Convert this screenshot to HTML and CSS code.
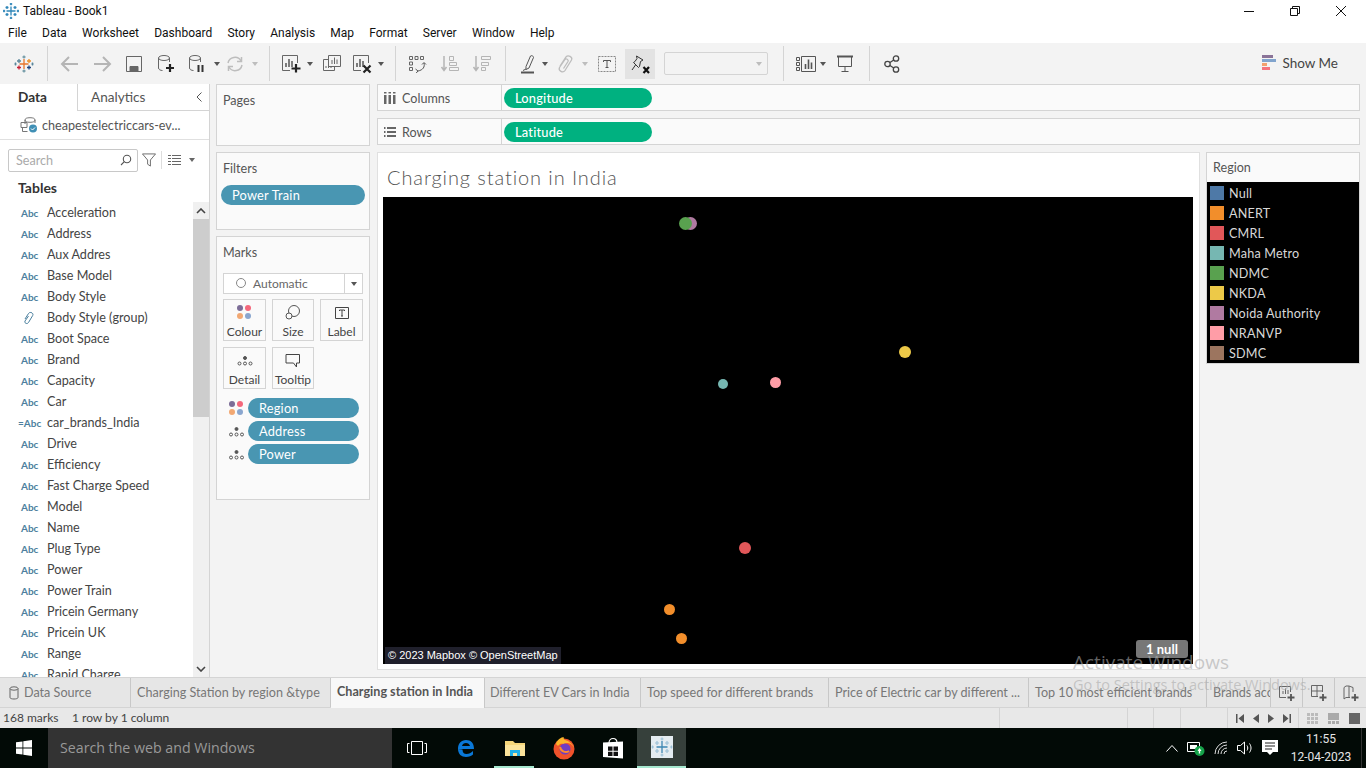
FILE: index.html
```html
<!DOCTYPE html>
<html lang="en">
<head>
    <meta charset="UTF-8">
    <title>Tableau - Book1</title>
    <link rel="stylesheet" href="styles.css">
</head>
<body>

    <!-- title bar -->
    <div class="titlebar">
        <svg class="app-logo" width="18" height="18" viewBox="0 0 18 18" fill="none" stroke="#2f86b8" stroke-width="1.300"><path d="M9 4.500v9M4.500 9h9"/><path d="M5 4v3M3.500 5.500h3M13 4v3M11.500 5.500h3M5 11v3M3.500 12.500h3M13 11v3M11.500 12.500h3"/><path d="M9 1v2.200M7.800 2h2.400M9 14.800V17M7.800 16h2.400M1 9h2.200M2 7.800v2.400M14.800 9H17M16 7.800v2.400"/></svg>
        <span class="app-title">Tableau - Book1</span>
        <div class="win-buttons">
            <svg width="12" height="12" viewBox="0 0 12 12"><path d="M1 6.500h10" stroke="#111" fill="none"/></svg>
            <svg width="12" height="12" viewBox="0 0 12 12"><path d="M1.500 3.500h7v7h-7zM3.500 3.500v-2h7v7h-2" stroke="#111" fill="none"/></svg>
            <svg width="12" height="12" viewBox="0 0 12 12"><path d="M1 1l10 10M11 1L1 11" stroke="#111" fill="none"/></svg>
        </div>
    </div>

    <!-- menu -->
    <div class="menubar">
        <span>File</span><span>Data</span><span>Worksheet</span><span>Dashboard</span><span>Story</span><span>Analysis</span><span>Map</span><span>Format</span><span>Server</span><span>Window</span><span>Help</span>
    </div>

    <!-- toolbar -->
    <div class="toolbar">
        <div class="tool w47"><svg width="20" height="20" viewBox="0 0 20 20" fill="none" stroke-width="1.300"><path d="M10 5v10M5.500 10h9" stroke="#e8762b"/><path d="M5 5v4M3 7h4" stroke="#5b879b"/><path d="M15 5v4M13 7h4" stroke="#eb912b"/><path d="M5 11.500v4M3 13.500h4" stroke="#c72035"/><path d="M15 11.500v4M13 13.500h4" stroke="#1f447e"/><path d="M10 1.500v3M8.500 3h3M10 15.500v3M8.500 17h3" stroke="#7099a6"/><path d="M1.500 8.500v3M.5 10h2M18.500 8.500v3M17.500 10h2" stroke="#59879b"/></svg></div>
        <div class="sep"></div>
        <div class="tool w32 ml6"><svg width="20" height="20" viewBox="0 0 20 20" fill="none" stroke="#b5b5b5" stroke-width="2"><path d="M2 10h16M9 3l-7 7 7 7"/></svg></div>
        <div class="tool w32"><svg width="20" height="20" viewBox="0 0 20 20" fill="none" stroke="#b5b5b5" stroke-width="2"><path d="M2 10h16M11 3l7 7-7 7"/></svg></div>
        <div class="tool w32"><svg width="18" height="18" viewBox="0 0 18 18" fill="none" stroke="#666"><path d="M1.500 1.500h15v15h-15z"/><path d="M5 16.500v-5h8v5" fill="#666"/></svg></div>
        <div class="tool w32"><svg width="20" height="20" viewBox="0 0 20 20" fill="none"><ellipse cx="8" cy="4" rx="5.500" ry="2.500" stroke="#666"/><path d="M2.500 4v10c0 1.500 2 2.500 4 2.500M13.500 4v4" stroke="#666"/><path d="M14 10v8M10 14h8" stroke="#222" stroke-width="2.200"/></svg></div>
        <div class="tool w30"><svg width="20" height="20" viewBox="0 0 20 20" fill="none"><ellipse cx="8" cy="4" rx="5.500" ry="2.500" stroke="#666"/><path d="M2.500 4v10c0 1.500 2 2.500 4 2.500M13.500 4v4" stroke="#666"/><path d="M11.500 11v7M15.500 11v7" stroke="#333" stroke-width="2"/></svg></div>
        <div class="tool w10"><i class="caret"></i></div>
        <div class="tool w26"><svg width="20" height="20" viewBox="0 0 20 20" fill="none" stroke="#bdbdbd" stroke-width="1.500"><path d="M3 9a7 7 0 0 1 13-2M17 11a7 7 0 0 1-13 2"/><path d="M16.500 3v4.500H12M3.500 17v-4.500H8"/></svg></div>
        <div class="tool w14"><i class="caret off"></i></div>
        <div class="sep ml7"></div>

        <div class="tool ml9"><svg width="20" height="20" viewBox="0 0 20 20" fill="none"><path d="M9 16.500H1.500v-15h15V9" stroke="#666"/><path d="M5 13V9M8 13V5M11 13V7" stroke="#555" stroke-width="1.500"/><path d="M15 10v8.500M10.500 14.500h9" stroke="#222" stroke-width="2.200"/></svg></div>
        <div class="tool w14"><i class="caret"></i></div>
        <div class="tool ml3"><svg width="20" height="20" viewBox="0 0 20 20" fill="none" stroke="#666"><path d="M6.500 1.500h12v11h-12z" fill="#f3f3f3"/><path d="M10 10V6M12.500 10V3.500M15 10V5.500"/><path d="M6.500 5.500h-5v11h11v-4M4 14v-2M6.500 14v-2M9 14v-2"/></svg></div>
        <div class="tool ml6"><svg width="20" height="20" viewBox="0 0 20 20" fill="none"><path d="M9 16.500H1.500v-15h15V9" stroke="#666"/><path d="M5 13V9M8 13V5M11 13V7" stroke="#555" stroke-width="1.500"/><path d="M11.500 11.500l7 7M18.500 11.500l-7 7" stroke="#222" stroke-width="2.200"/></svg></div>
        <div class="tool w14"><i class="caret"></i></div>
        <div class="sep ml7"></div>

        <div class="tool ml9"><svg width="20" height="20" viewBox="0 0 20 20" fill="none" stroke="#666"><path d="M2.500 2.500h3v3h-3zM8 2.500h3v3H8zM13.500 2.500h3v3h-3zM2.500 8h3v3h-3zM2.500 13.500h3v3h-3z"/><path d="M17 9c1 4-1 7-6 8M8.500 15l2.500 2-1.800 2M15 10.500l2-2 2 2" stroke="#555"/></svg></div>
        <div class="tool ml9"><svg width="20" height="20" viewBox="0 0 20 20" fill="none" stroke="#b5b5b5"><path d="M4 2v14M1.500 13L4 16.500 6.500 13" stroke-width="1.500"/><path d="M9.500 2.500h4v4h-4zM9.500 8.500h7v3h-7zM9.500 13.500h9v3h-9z"/></svg></div>
        <div class="tool ml8"><svg width="20" height="20" viewBox="0 0 20 20" fill="none" stroke="#b5b5b5"><path d="M4 2v14M1.500 13L4 16.500 6.500 13" stroke-width="1.500"/><path d="M9.500 2.500h9v3h-9zM9.500 8.500h7v3h-7zM9.500 13.500h4v3h-4z"/></svg></div>
        <div class="sep ml11"></div>

        <div class="tool ml10"><svg width="20" height="20" viewBox="0 0 20 20" fill="none" stroke="#555"><path d="M8 12.500L12.500 2c.5-1 3.500 .3 3 1.500L11 14l-3 1.500z"/><path d="M3 18.500h13" stroke="#555" stroke-width="2"/><path d="M5 16.500l3-1.500"/></svg></div>
        <div class="tool w10"><i class="caret"></i></div>
        <div class="tool ml4"><svg width="20" height="20" viewBox="0 0 20 20" fill="none" stroke="#bdbdbd" stroke-width="1.300"><path d="M4 12L10 3c2-2.500 7 0 5.500 3L9 16.500c-2 3-7 .5-5.500-3L9 5.500c1-1.500 4 0 3 2L7.500 14.500"/></svg></div>
        <div class="tool w10 ml2"><i class="caret off"></i></div>
        <div class="tool ml5"><svg width="18" height="16" viewBox="0 0 18 16" fill="none"><path d="M.5.500h17v15H.5z" stroke="#888" stroke-dasharray="2 1"/><path d="M5.500 6V4.500h7V6M9 4.500v7M7.500 11.500h3" stroke="#555"/></svg></div>
        <div class="tool pinned ml6"><svg width="20" height="20" viewBox="0 0 20 20" fill="none"><path d="M6.500 2L13 6l-2.500 1.500-1 5-1 1-5-5 1.500-1L7 4.500z" stroke="#333"/><path d="M5.500 11L2 16" stroke="#333"/><path d="M13.500 13l5.500 6M19 13l-5.500 6" stroke="#111" stroke-width="2.200"/></svg></div>
        <div class="fit-select"><i class="caret off"></i></div>
        <div class="sep ml15"></div>

        <div class="tool ml10"><svg width="20" height="16" viewBox="0 0 20 16" fill="none" stroke="#555"><path d="M.5 1.500h3v3h-3zM.5 6.500h3v3h-3zM.5 11.500h3v3h-3zM5.500.5h14v15h-14z"/><path d="M9.500 13V8M12.500 13V3.500M15.500 13V6.500" stroke-width="1.600"/></svg></div>
        <div class="tool w10"><i class="caret"></i></div>
        <div class="tool ml5"><svg width="18" height="18" viewBox="0 0 18 18" fill="none" stroke="#555"><path d="M1 1.500h16" stroke-width="2"/><path d="M2.500 2v9.500h13V2M9 11.500v5M5.500 16.500h7"/></svg></div>
        <div class="sep ml12"></div>

        <div class="tool ml10"><svg width="16" height="18" viewBox="0 0 16 18" fill="none" stroke="#444" stroke-width="1.300"><circle cx="3.500" cy="9" r="2.700"/><circle cx="12" cy="3.500" r="2.700"/><circle cx="12" cy="14.500" r="2.700"/><path d="M6 7.500l3.700-2.500M6 10.500l3.700 2.500"/></svg></div>

        <div class="show-me">
            <div class="show-bars"><i class="b1"></i><i class="b2"></i><i class="b3"></i><i class="b4"></i></div>
            <span>Show Me</span>
        </div>
    </div>

    <!-- main -->
    <div class="main">
        <div class="data-pane">
            <div class="pane-tabs">
                <div class="pane-tab-data">Data</div>
                <div class="pane-tab-analytics">Analytics<span class="collapse"><svg width="8" height="10" viewBox="0 0 8 10" fill="none" stroke="#555"><path d="M6.500 .5L2 5l4.500 4.500"/></svg></span></div>
            </div>
            <div class="source-row">
                <svg width="20" height="18" viewBox="0 0 20 18" fill="none" stroke="#777"><ellipse cx="11" cy="4" rx="5" ry="2.300"/><path d="M6 4v4M16 4v3"/><path d="M2 6.500h6v5H2zM3.500 11.500v4h5"/><circle cx="14" cy="12.500" r="4" fill="#3f8fb5" stroke="none"/><path d="M12 12.500l1.500 1.500 2.500-2.500" stroke="#fff"/></svg>
                <span>cheapestelectriccars-ev...</span>
            </div>
            <div class="search-row">
                <div class="search-box">
                    <span>Search</span>
                    <svg width="12" height="12" viewBox="0 0 12 12" fill="none" stroke="#555" stroke-width="1.100"><circle cx="7" cy="5" r="3.700"/><path d="M4.300 7.700L1 11"/></svg>
                </div>
                <svg class="funnel" width="14" height="14" viewBox="0 0 15 14" fill="none" stroke="#666"><path d="M.5 .5h14L9 7v6.500l-3-2V7z"/></svg>
                <div class="search-sep"></div>
                <svg class="list-view" width="13" height="10" viewBox="0 0 13 10" stroke="#666" fill="none"><path d="M0 .5h3M4 .5h9M0 3.500h3M4 3.500h9M0 6.500h3M4 6.500h9M0 9.500h3M4 9.500h9"/></svg>
                <i class="caret"></i>
            </div>
            <div class="tables-title">Tables</div>
            <div class="field-area">
                <div class="field-list">
                    <div class="field"><span class="abc">Abc</span>Acceleration</div>
                    <div class="field"><span class="abc">Abc</span>Address</div>
                    <div class="field"><span class="abc">Abc</span>Aux Addres</div>
                    <div class="field"><span class="abc">Abc</span>Base Model</div>
                    <div class="field"><span class="abc">Abc</span>Body Style</div>
                    <div class="field"><span class="abc clip"><svg width="12" height="14" viewBox="0 0 12 14" fill="none" stroke="#4a7f9e"><path d="M2 8l3.500-5.500c1.500-2.300 5.500-.5 4.200 2L5.500 11.500c-1.200 2-4.500 .8-3.500-1.500L5.500 5"/></svg></span>Body Style (group)</div>
                    <div class="field"><span class="abc">Abc</span>Boot Space</div>
                    <div class="field"><span class="abc">Abc</span>Brand</div>
                    <div class="field"><span class="abc">Abc</span>Capacity</div>
                    <div class="field"><span class="abc">Abc</span>Car</div>
                    <div class="field"><span class="abc calc">=Abc</span>car_brands_India</div>
                    <div class="field"><span class="abc">Abc</span>Drive</div>
                    <div class="field"><span class="abc">Abc</span>Efficiency</div>
                    <div class="field"><span class="abc">Abc</span>Fast Charge Speed</div>
                    <div class="field"><span class="abc">Abc</span>Model</div>
                    <div class="field"><span class="abc">Abc</span>Name</div>
                    <div class="field"><span class="abc">Abc</span>Plug Type</div>
                    <div class="field"><span class="abc">Abc</span>Power</div>
                    <div class="field"><span class="abc">Abc</span>Power Train</div>
                    <div class="field"><span class="abc">Abc</span>Pricein Germany</div>
                    <div class="field"><span class="abc">Abc</span>Pricein UK</div>
                    <div class="field"><span class="abc">Abc</span>Range</div>
                    <div class="field"><span class="abc">Abc</span>Rapid Charge</div>
                </div>
                <div class="scrollbar">
                    <div class="scroll-arrow"><svg width="10" height="6" viewBox="0 0 10 6" fill="none" stroke="#444" stroke-width="1.600"><path d="M1 5l4-4 4 4"/></svg></div>
                    <div class="scroll-thumb"></div>
                    <div class="scroll-track"></div>
                    <div class="scroll-arrow"><svg width="10" height="6" viewBox="0 0 10 6" fill="none" stroke="#444" stroke-width="1.600"><path d="M1 1l4 4 4-4"/></svg></div>
                </div>
            </div>
        </div>

        <div class="cards">
            <div class="card card-pages"><div class="card-title">Pages</div></div>
            <div class="card card-filters">
                <div class="card-title">Filters</div>
                <div class="pill filter-pill">Power Train</div>
            </div>
            <div class="card card-marks">
                <div class="card-title">Marks</div>
                <div class="mark-select">
                    <span class="mark-type"><i class="ring"></i>Automatic</span>
                    <span class="mark-drop"><i class="caret"></i></span>
                </div>
                <div class="mark-buttons">
                    <div class="mark-btn"><div class="dots"><i class="d1"></i><i class="d2"></i><i class="d3"></i><i class="d4"></i></div>Colour</div>
                    <div class="mark-btn"><svg width="16" height="16" viewBox="0 0 16 16" fill="none" stroke="#555"><circle cx="9" cy="7" r="5.500"/><circle cx="4" cy="12" r="3" fill="#fafafa"/></svg>Size</div>
                    <div class="mark-btn"><svg width="14" height="14" viewBox="0 0 14 14" fill="none" stroke="#444"><path d="M.5 1.500h13v11H.5z"/><path d="M4.500 5V4h5v1M7 4v6M6 10h2"/></svg>Label</div>
                    <div class="mark-btn"><svg width="16" height="16" viewBox="0 0 16 16" fill="none" stroke="#555"><circle cx="8" cy="6" r="1.500" fill="#555"/><circle cx="2.500" cy="11.500" r="1.500"/><circle cx="8" cy="11.500" r="1.500"/><circle cx="13.500" cy="11.500" r="1.500"/></svg>Detail</div>
                    <div class="mark-btn"><svg width="16" height="16" viewBox="0 0 16 16" fill="none" stroke="#444"><path d="M1 2.500h13.500v8.500h-3v4l-3-4H1z"/></svg>Tooltip</div>
                </div>
                <div class="mark-row">
                    <div class="dots small"><i class="d1"></i><i class="d2"></i><i class="d3"></i><i class="d4"></i></div>
                    <div class="pill">Region</div>
                </div>
                <div class="mark-row">
                    <svg class="row-icon" width="15" height="14" viewBox="0 0 15 14" fill="none" stroke="#555"><circle cx="7.500" cy="5" r="1.500" fill="#555"/><circle cx="2" cy="10.500" r="1.500"/><circle cx="7.500" cy="10.500" r="1.500"/><circle cx="13" cy="10.500" r="1.500"/></svg>
                    <div class="pill">Address</div>
                </div>
                <div class="mark-row">
                    <svg class="row-icon" width="15" height="14" viewBox="0 0 15 14" fill="none" stroke="#555"><circle cx="7.500" cy="5" r="1.500" fill="#555"/><circle cx="2" cy="10.500" r="1.500"/><circle cx="7.500" cy="10.500" r="1.500"/><circle cx="13" cy="10.500" r="1.500"/></svg>
                    <div class="pill">Power</div>
                </div>
            </div>
        </div>

        <div class="view">
            <div class="shelf">
                <div class="shelf-label"><svg width="12" height="12" viewBox="0 0 12 12" fill="#666"><path d="M0 3h2.500v9H0zM4.500 3H7v9H4.500zM9 3h2.500v9H9zM0 0h2.500v1.500H0zM4.500 0H7v1.500H4.500zM9 0h2.500v1.500H9z"/></svg>Columns</div>
                <div class="shelf-body"><div class="pill green">Longitude</div></div>
            </div>
            <div class="shelf">
                <div class="shelf-label"><svg width="12" height="12" viewBox="0 0 12 12" fill="#666"><path d="M0 1h1.500v2H0zM3 1h9v2H3zM0 5h1.500v2H0zM3 5h9v2H3zM0 9h1.500v2H0zM3 9h9v2H3z"/></svg>Rows</div>
                <div class="shelf-body"><div class="pill green">Latitude</div></div>
            </div>
            <div class="view-row">
                <div class="sheet">
                    <div class="sheet-title">Charging station in India</div>
                    <div class="map">
                        <i class="mark m-purple"></i>
                        <i class="mark m-green"></i>
                        <i class="mark m-teal"></i>
                        <i class="mark m-pink"></i>
                        <i class="mark m-yellow"></i>
                        <i class="mark m-red"></i>
                        <i class="mark m-orange1"></i>
                        <i class="mark m-orange2"></i>
                        <div class="map-credit">© 2023 Mapbox © OpenStreetMap</div>
                        <div class="null-badge">1 null</div>
                    </div>
                </div>
                <div class="legend">
                    <div class="legend-title">Region</div>
                    <div class="legend-list">
                        <div class="legend-item"><i class="sw-null"></i>Null</div>
                        <div class="legend-item"><i class="sw-anert"></i>ANERT</div>
                        <div class="legend-item"><i class="sw-cmrl"></i>CMRL</div>
                        <div class="legend-item"><i class="sw-maha"></i>Maha Metro</div>
                        <div class="legend-item"><i class="sw-ndmc"></i>NDMC</div>
                        <div class="legend-item"><i class="sw-nkda"></i>NKDA</div>
                        <div class="legend-item"><i class="sw-noida"></i>Noida Authority</div>
                        <div class="legend-item"><i class="sw-nranvp"></i>NRANVP</div>
                        <div class="legend-item"><i class="sw-sdmc"></i>SDMC</div>
                    </div>
                </div>
            </div>
        </div>
    </div>

    <!-- sheet tabs -->
    <div class="tabs">
        <div class="tab tab-source"><svg width="10" height="14" viewBox="0 0 10 14" fill="none" stroke="#666"><ellipse cx="5" cy="2.500" rx="4" ry="1.700"/><path d="M1 2.500v9c0 2 8 2 8 0v-9"/></svg>Data Source</div>
        <div class="tab tab-1">Charging Station by region &amp;type</div>
        <div class="tab tab-active">Charging station in India</div>
        <div class="tab tab-3">Different EV Cars in India</div>
        <div class="tab tab-4">Top speed for different brands</div>
        <div class="tab tab-5">Price of Electric car by different ...</div>
        <div class="tab tab-6">Top 10 most efficient brands</div>
        <div class="tab tab-7">Brands acc</div>
        <div class="tab-add"><svg width="16" height="16" viewBox="0 0 16 16" fill="none"><path d="M7 12.500H.5v-11h11V7" stroke="#666"/><path d="M4 9V6M6.500 9V3.500M9 9V5" stroke="#666"/><path d="M12 9v7M8.500 12.500h7" stroke="#555" stroke-width="1.800"/></svg></div>
        <div class="tab-add"><svg width="16" height="16" viewBox="0 0 16 16" fill="none"><path d="M7 11.500H.5v-11h11V7M6 .5v11M.5 6h11" stroke="#666"/><path d="M12 9v7M8.500 12.500h7" stroke="#555" stroke-width="1.800"/></svg></div>
        <div class="tab-add"><svg width="16" height="16" viewBox="0 0 16 16" fill="none"><path d="M7 12.500H3L1 14V2.500L3 1h3l4 1.500V7M6 1v11" stroke="#666"/><path d="M12 9v7M8.500 12.500h7" stroke="#555" stroke-width="1.800"/></svg></div>
    </div>

    <!-- status bar -->
    <div class="statusbar">
        <span class="status-marks">168 marks</span>
        <span class="status-size">1 row by 1 column</span>
        <div class="status-cell cell-a"></div>
        <div class="status-cell cell-b"></div>
        <div class="status-cell cell-c"></div>
        <div class="status-cell cell-d"></div>
        <div class="status-nav">
            <svg width="8" height="9" viewBox="0 0 8 9" fill="#555"><path d="M0 0h1.500v9H0zM8 0v9L2.500 4.500z"/></svg>
            <svg width="6" height="9" viewBox="0 0 6 9" fill="#555"><path d="M6 0v9L0 4.500z"/></svg>
            <svg width="6" height="9" viewBox="0 0 6 9" fill="#555"><path d="M0 0v9l6-4.500z"/></svg>
            <svg width="8" height="9" viewBox="0 0 8 9" fill="#555"><path d="M0 0v9l5.500-4.500zM6.500 0H8v9H6.500z"/></svg>
        </div>
        <div class="status-view">
            <svg width="11" height="11" viewBox="0 0 11 11" fill="#bbb"><path d="M0 0h3v3H0zM4 0h3v3H4zM8 0h3v3H8zM0 4h3v3H0zM4 4h3v3H4zM8 4h3v3H8zM0 8h3v3H0zM4 8h3v3H4zM8 8h3v3H8z"/></svg>
            <svg width="11" height="11" viewBox="0 0 11 11" fill="#aaa"><path d="M0 0h11v7H0zM0 8h3v3H0zM4 8h3v3H4zM8 8h3v3H8z"/></svg>
            <svg width="11" height="11" viewBox="0 0 11 11" fill="#666"><path d="M0 0h11v11H0z"/></svg>
        </div>
    </div>

    <!-- windows taskbar -->
    <div class="taskbar">
        <div class="start"><svg width="16" height="16" viewBox="0 0 16 16" fill="#fff"><path d="M0 2.300l6.500-.9v6.200H0zM7.300 1.300L16 0v7.600H7.300zM0 8.400h6.500v6.200L0 13.700zM7.300 8.400H16V16l-8.700-1.300z"/></svg></div>
        <div class="task-search">Search the web and Windows</div>
        <div class="task-icons">
            <div class="task-icon"><svg width="20" height="14" viewBox="0 0 20 14" fill="none" stroke="#fff"><path d="M4.500 .5h11v13h-11zM2.500 2.500h-2v9h2M17.500 2.500h2v9h-2"/></svg></div>
            <div class="task-icon"><svg width="22" height="22" viewBox="0 0 22 22" fill="none"><path d="M3 12h16c0-6-3-9-8-9-5 0-8 3.500-8 9 0 5 3.500 8 8 8 3 0 5.500-1 7-2.500v-3.500c-2 2-4 3-6.500 3-2.500 0-4-1.500-4-4.500M7 9c.5-2 2-3 4-3s3.500 1 4 3z" fill="#0a78d7"/></svg></div>
            <div class="task-icon running"><svg width="22" height="20" viewBox="0 0 22 20"><path d="M1 3h8l2 2h10v13H1z" fill="#f5d67a"/><path d="M1 7h20v11H1z" fill="#fbe49b"/><path d="M6 18v-6h10v6h-3v-3H9v3z" fill="#1fb0e8"/></svg></div>
            <div class="task-icon"><svg width="24" height="24" viewBox="0 0 24 24"><circle cx="12" cy="13" r="10.500" fill="#f0522b"/><path d="M4 8c1-4 5-7 8-7 0 0-1 2 1 3 4 1 8 4 9 8 0 0-2-5-7-5-2 0-3 1-3 1s-4-1-5 1-3-1-3-1z" fill="#fbb52a"/><circle cx="13" cy="13" r="5.500" fill="#6f3dc1"/><path d="M8 11c1 5 6 6 9 4" stroke="#ff8a2a" stroke-width="2" fill="none"/></svg></div>
            <div class="task-icon"><svg width="22" height="24" viewBox="0 0 22 24" fill="none"><path d="M7 7c0-6 8-6 8 0" stroke="#fff" stroke-width="1.200"/><path d="M1 6.500l20-1v17l-20-1.500z" fill="#fff"/><path d="M6 10.500h4.500v4.300H6zM11.500 10.500H16v4.300h-4.500zM6 15.800h4.500v4.200H6zM11.500 15.800H16v4.200h-4.500z" fill="#111"/></svg></div>
            <div class="task-icon active"><svg width="22" height="22" viewBox="0 0 22 22" fill="none"><rect width="22" height="22" fill="#e4ecf1"/><path d="M11 5v12M5.500 11h11" stroke="#3d86b3" stroke-width="1.300"/><path d="M6 5v4M4 7h4M16 5v4M14 7h4M6 13v4M4 15h4M16 13v4M14 15h4M11 1.500v3M9.500 3h3M11 17.500v3M9.500 19h3M1.500 9.500v3M.5 11h2.500M20.500 9.500v3M19 11h2.500" stroke="#9cc0d6" stroke-width="1.200"/></svg></div>
        </div>
        <div class="tray">
            <svg width="12" height="8" viewBox="0 0 12 8" fill="none" stroke="#fff"><path d="M.5 7.500l5.500-6 5.500 6"/></svg>
            <svg width="18" height="16" viewBox="0 0 18 16"><path d="M.5 2.500h12v9H.5z" fill="none" stroke="#fff"/><path d="M3 5h7v4H3z" fill="#fff"/><circle cx="12.500" cy="11" r="5" fill="#16a34a"/><path d="M12.500 8l2 3h-1.300v2.500h-1.400V11h-1.300z" fill="#fff"/></svg>
            <svg width="14" height="14" viewBox="0 0 14 14" fill="none" stroke="#ddd"><path d="M1 13A12 12 0 0 1 13 1M4 13A9 9 0 0 1 13 4M7 13a6 6 0 0 1 6-6M10 13a3 3 0 0 1 3-3"/></svg>
            <svg width="16" height="14" viewBox="0 0 16 14" fill="none" stroke="#fff"><path d="M.5 4.500h3L7.500 1v12l-4-3.500h-3zM10 4.500c1 1.500 1 3.500 0 5M12.500 2.500c2 3 2 6 0 9"/></svg>
            <svg width="16" height="16" viewBox="0 0 16 16"><path d="M0 0h16v12h-5l-3 3-3-3H0z" fill="#fff"/><path d="M3 3h10M3 6h10M3 9h7" stroke="#222"/></svg>
            <div class="clock"><span>11:55</span><span>12-04-2023</span></div>
            <div class="show-desktop"></div>
        </div>
    </div>

    <div class="watermark">
        <div class="wm-big">Activate Windows</div>
        <div class="wm-small">Go to Settings to activate Windows.</div>
    </div>

</body>
</html>
```

FILE: styles.css
```css
* {
    box-sizing: border-box;
}

body {
    margin: 0;
    width: 1366px;
    height: 768px;
    overflow: hidden;
    position: relative;
    display: flex;
    flex-direction: column;
    font-family: 'Lato', sans-serif;
    font-size: 12.600px;
    color: #444;
    background-color: #f3f3f3;
}

svg {
    flex: none;
    display: block;
}

i {
    display: block;
}

/* window chrome */
.titlebar {
    height: 22px;
    background-color: #fff;
    display: flex;
    align-items: center;
    padding-left: 2px;
    font-family: 'Roboto', sans-serif;
    font-size: 12px;
    color: #111;
}

.app-logo {
    margin-right: 3px;
}

.win-buttons {
    margin-left: auto;
    display: flex;
    gap: 34px;
    margin-right: 19px;
}

.menubar {
    height: 21px;
    background-color: #fff;
    display: flex;
    align-items: center;
    gap: 15.200px;
    padding-left: 8px;
    font-family: 'Roboto', sans-serif;
    font-size: 12px;
    color: #111;
}

/* toolbar */
.toolbar {
    height: 41px;
    background-color: #f3f3f3;
    display: flex;
    align-items: center;
}

.tool {
    width: 24px;
    height: 30px;
    flex: none;
    display: flex;
    align-items: center;
    justify-content: center;
}

.pinned {
    width: 30px;
    background-color: #e3e3e3;
}

.w47 { width: 47px; }
.w32 { width: 32px; }
.w30 { width: 30px; }
.w26 { width: 26px; }
.w14 { width: 14px; }
.w10 { width: 10px; }

.ml2 { margin-left: 2px; }
.ml3 { margin-left: 3px; }
.ml4 { margin-left: 4px; }
.ml5 { margin-left: 5px; }
.ml6 { margin-left: 6px; }
.ml7 { margin-left: 7px; }
.ml8 { margin-left: 8px; }
.ml9 { margin-left: 9px; }
.ml10 { margin-left: 10px; }
.ml11 { margin-left: 11px; }
.ml12 { margin-left: 12px; }
.ml15 { margin-left: 15px; }

.sep {
    width: 1px;
    height: 35px;
    background-color: #d4d4d4;
    flex: none;
}

.caret {
    width: 0;
    height: 0;
    border-left: 3.500px solid transparent;
    border-right: 3.500px solid transparent;
    border-top: 4px solid #555;
}

.caret.off {
    border-top-color: #bdbdbd;
}

.fit-select {
    width: 104px;
    height: 23px;
    margin-left: 9px;
    border: 1px solid #d4d4d4;
    border-radius: 2px;
    display: flex;
    align-items: center;
    justify-content: flex-end;
    padding-right: 5px;
    flex: none;
}

.show-me {
    margin-left: auto;
    margin-right: 28px;
    display: flex;
    align-items: center;
    gap: 6px;
    font-size: 13.500px;
    line-height: 16px;
    padding-bottom: 1px;
    color: #444;
}

.show-bars i {
    height: 3px;
    margin-bottom: 1px;
}

.b1 { width: 11px; background-color: #8a7398; }
.b2 { width: 14px; background-color: #81a4cd; }
.b3 { width: 5px; background-color: #f2a06e; }
.b4 { width: 8px; background-color: #f4737e; }

/* main area */
.main {
    height: 593px;
    display: flex;
    background-color: #f3f3f3;
}

.data-pane {
    width: 210px;
    flex: none;
    background-color: #fff;
    border-right: 1px solid #d4d4d4;
    display: flex;
    flex-direction: column;
}

.pane-tabs {
    height: 27px;
    display: flex;
    flex: none;
    font-size: 13.600px;
}

.pane-tab-data {
    width: 77px;
    padding: 5px 0 0 18px;
    font-weight: 700;
    color: #333;
}

.pane-tab-analytics {
    flex: 1;
    border-left: 1px solid #d4d4d4;
    border-bottom: 1px solid #d4d4d4;
    padding: 5px 0 0 13px;
    position: relative;
    color: #555;
}

.collapse {
    position: absolute;
    right: 6px;
    top: 8px;
}

.source-row {
    height: 29px;
    flex: none;
    border-bottom: 1px solid #e0e0e0;
    display: flex;
    align-items: center;
    gap: 3px;
    padding-left: 19px;
    color: #555;
}

.search-row {
    height: 39px;
    flex: none;
    display: flex;
    align-items: center;
    padding: 1px 0 0 8px;
}

.search-box {
    width: 130px;
    height: 23px;
    border: 1px solid #c8c8c8;
    border-radius: 2px;
    display: flex;
    align-items: center;
    justify-content: space-between;
    padding: 0 5px 0 7px;
    color: #aaa;
}

.funnel {
    margin-left: 4px;
}

.search-sep {
    width: 1px;
    height: 18px;
    background-color: #ddd;
    margin: 0 6px 0 5px;
}

.list-view {
    margin-right: 8px;
}

.search-row .caret {
    border-top-color: #666;
}

.tables-title {
    height: 23px;
    flex: none;
    padding-left: 18px;
    font-size: 14px;
    font-weight: 700;
    color: #333;
}

.field-area {
    flex: 1;
    min-height: 0;
    display: flex;
}

.field-list {
    flex: 1;
    overflow: hidden;
}

.field {
    height: 21px;
    display: flex;
    align-items: center;
    padding-left: 21px;
    color: #444;
    white-space: nowrap;
}

.abc {
    width: 26px;
    flex: none;
    font-size: 10px;
    font-weight: 700;
    color: #4d7f9e;
}

.abc.clip {
    padding-left: 2px;
}

.abc.calc {
    margin-left: -3px;
    width: 29px;
}

.scrollbar {
    width: 16px;
    flex: none;
    background-color: #f0f0f0;
    display: flex;
    flex-direction: column;
}

.scroll-arrow {
    height: 17px;
    flex: none;
    display: flex;
    align-items: center;
    justify-content: center;
}

.scroll-thumb {
    height: 198px;
    flex: none;
    background-color: #cdcdcd;
}

.scroll-track {
    flex: 1;
}

/* shelves and cards */
.cards {
    width: 154px;
    flex: none;
    margin-left: 6px;
    display: flex;
    flex-direction: column;
    gap: 6px;
}

.card {
    background-color: #fafafa;
    border: 1px solid #d4d4d4;
    padding: 7px 6px 0 6px;
}

.card-title {
    color: #555;
    line-height: 17px;
}

.card-pages { height: 62px; }
.card-filters { height: 78px; padding-left: 4px; padding-right: 4px; }
.card-marks { height: 264px; }

.card-filters .card-title {
    padding-left: 2px;
}

.pill {
    height: 20px;
    border-radius: 10px;
    background-color: #4996b2;
    color: #fff;
    padding-left: 11px;
    line-height: 20px;
    font-size: 12.800px;
    letter-spacing: 0.200px;
}

.filter-pill {
    margin-top: 8px;
}

.pill.green {
    width: 148px;
    background-color: #00b180;
    font-weight: 500;
}

.mark-select {
    margin-top: 12px;
    height: 21px;
    border: 1px solid #d4d4d4;
    background-color: #fff;
    display: flex;
    font-size: 12px;
    line-height: 17px;
    color: #666;
}

.mark-type {
    flex: 1;
    display: flex;
    align-items: center;
    padding: 0 0 1px 12px;
    gap: 7px;
}

.ring {
    width: 10px;
    height: 10px;
    border: 1px solid #888;
    border-radius: 50%;
}

.mark-drop {
    width: 18px;
    border-left: 1px solid #d4d4d4;
    display: flex;
    align-items: center;
    justify-content: center;
}

.mark-buttons {
    margin-top: 5px;
    display: grid;
    grid-template-columns: 43px 42px 43px;
    gap: 6px;
}

.mark-btn {
    height: 42px;
    border: 1px solid #d4d4d4;
    display: flex;
    flex-direction: column;
    align-items: center;
    justify-content: flex-end;
    gap: 4px;
    padding-bottom: 1px;
    font-size: 12px;
    color: #444;
}

.dots {
    width: 15px;
    display: grid;
    grid-template-columns: 6px 6px;
    gap: 2px;
    margin-bottom: 1px;
}

.dots i {
    width: 6px;
    height: 6px;
    border-radius: 50%;
}

.d1 { background-color: #7c6d97; }
.d2 { background-color: #f4687c; }
.d3 { background-color: #f2a873; }
.d4 { background-color: #8aa6cf; }

.dots.small {
    margin: 0;
    width: 16px;
}

.mark-row {
    display: flex;
    align-items: center;
    margin-top: 3px;
    padding-left: 6px;
}

.mark-buttons + .mark-row {
    margin-top: 9px;
}

.mark-row .pill {
    width: 111px;
    margin-left: 3px;
}

.mark-row .row-icon {
    margin-right: 1px;
}

.view {
    flex: 1;
    min-width: 0;
    margin-left: 7px;
    margin-right: 6px;
    display: flex;
    flex-direction: column;
}

.shelf {
    height: 27px;
    flex: none;
    margin-bottom: 7px;
    background-color: #fafafa;
    border: 1px solid #d4d4d4;
    display: flex;
}

.shelf-label {
    width: 124px;
    border-right: 1px solid #d4d4d4;
    display: flex;
    align-items: center;
    gap: 6px;
    padding: 1px 0 0 6px;
    color: #555;
}

.shelf-body {
    padding: 3px 0 0 2px;
}

.view-row {
    flex: 1;
    display: flex;
    gap: 6px;
    margin-bottom: 7px;
}

.sheet {
    width: 823px;
    flex: none;
    background-color: #fff;
    border: 1px solid #e0e0e0;
    padding: 0 6px 5px 5px;
    display: flex;
    flex-direction: column;
}

.sheet-title {
    height: 44px;
    flex: none;
    padding: 10px 0 0 4px;
    font-size: 20px;
    font-weight: 300;
    line-height: 28px;
    color: #555;
    letter-spacing: 0.900px;
}

.map {
    flex: 1;
    background-color: #000;
    position: relative;
}

.mark {
    position: absolute;
    border-radius: 50%;
}

.m-purple { left: 301px; top: 20px; width: 13px; height: 13px; background-color: #b07aa1; }
.m-green { left: 296px; top: 20px; width: 13px; height: 13px; background-color: #59a14f; }
.m-teal { left: 335px; top: 182px; width: 10px; height: 10px; background-color: #76b7b2; }
.m-pink { left: 387px; top: 180px; width: 11px; height: 11px; background-color: #ff9da7; }
.m-yellow { left: 516px; top: 149px; width: 12px; height: 12px; background-color: #edc948; }
.m-red { left: 356px; top: 345px; width: 12px; height: 12px; background-color: #e15759; }
.m-orange1 { left: 281px; top: 407px; width: 11px; height: 11px; background-color: #f28e2b; }
.m-orange2 { left: 293px; top: 436px; width: 11px; height: 11px; background-color: #f28e2b; }

.map-credit {
    position: absolute;
    left: 2px;
    bottom: 0;
    height: 17px;
    padding: 0 3px;
    background-color: #20202c;
    color: #fff;
    font-family: 'Liberation Sans', sans-serif;
    font-size: 11px;
    line-height: 17px;
}

.null-badge {
    position: absolute;
    right: 5px;
    top: 443px;
    width: 52px;
    height: 18px;
    border-radius: 3px;
    background-color: #777;
    color: #fff;
    font-weight: 700;
    font-size: 13px;
    line-height: 18px;
    text-align: center;
}

.legend {
    flex: 1;
    height: 212px;
    background-color: #fafafa;
    border: 1px solid #d4d4d4;
    display: flex;
    flex-direction: column;
}

.legend-title {
    height: 29px;
    padding: 7px 0 0 6px;
    color: #555;
}

.legend-list {
    flex: 1;
    background-color: #000;
    padding-top: 1px;
}

.legend-item {
    height: 20px;
    display: flex;
    align-items: center;
    gap: 5px;
    padding-left: 3px;
    color: #d8d8d8;
    letter-spacing: 0.200px;
}

.legend-item i {
    width: 14px;
    height: 14px;
}

.sw-null { background-color: #4e79a7; }
.sw-anert { background-color: #f28e2b; }
.sw-cmrl { background-color: #e15759; }
.sw-maha { background-color: #76b7b2; }
.sw-ndmc { background-color: #59a14f; }
.sw-nkda { background-color: #edc948; }
.sw-noida { background-color: #b07aa1; }
.sw-nranvp { background-color: #ff9da7; }
.sw-sdmc { background-color: #9c755f; }

/* sheet tabs */
.tabs {
    height: 31px;
    flex: none;
    background-color: #e6e6e6;
    border-top: 1px solid #d4d4d4;
    border-bottom: 1px solid #d4d4d4;
    display: flex;
}

.tab {
    flex: none;
    height: 29px;
    border-right: 1px solid #c8c8c8;
    padding-left: 6px;
    display: flex;
    align-items: center;
    color: #777;
    white-space: nowrap;
    overflow: hidden;
}

.tab-source { width: 131px; padding-left: 9px; gap: 5px; }
.tab-1 { width: 200px; }
.tab-active {
    width: 154px;
    background-color: #f8f8f8;
    font-weight: 700;
    color: #555;
    height: 30px;
    align-items: flex-start;
    padding-top: 6px;
}
.tab-3 { width: 156px; padding-left: 5px; }
.tab-4 { width: 188px; }
.tab-5 { width: 200px; }
.tab-6 { width: 178px; }
.tab-7 { width: 63px; border-right: none; }

.tab-add {
    width: 32px;
    height: 29px;
    flex: none;
    border-left: 1px solid #c8c8c8;
    display: flex;
    align-items: center;
    justify-content: center;
}

/* status bar */
.statusbar {
    height: 20px;
    flex: none;
    position: relative;
    background-color: #e8e8e8;
    font-size: 12px;
    line-height: 20px;
    color: #444;
    display: flex;
}

.status-marks {
    margin-left: 3px;
    width: 69px;
}

.status-cell {
    position: absolute;
    top: 0;
    height: 20px;
    width: 1px;
    background-color: #d4d4d4;
}

.cell-a { left: 999px; }
.cell-b { left: 1127px; }
.cell-c { left: 1153px; }
.cell-d { left: 1180px; }

.status-nav {
    position: absolute;
    left: 1227px;
    width: 72px;
    height: 20px;
    border-left: 1px solid #d4d4d4;
    border-right: 1px solid #d4d4d4;
    display: flex;
    align-items: center;
    gap: 9px;
    padding-left: 8px;
}

.status-view {
    position: absolute;
    left: 1307px;
    height: 20px;
    display: flex;
    align-items: center;
    gap: 10px;
}

/* taskbar */
.taskbar {
    height: 40px;
    flex: none;
    background-color: #020a06;
    display: flex;
    align-items: center;
    color: #fff;
}

.start {
    width: 48px;
    height: 40px;
    display: flex;
    align-items: center;
    justify-content: center;
}

.task-search {
    width: 344px;
    height: 40px;
    background-color: #333;
    padding-left: 12px;
    font-family: 'Open Sans', sans-serif;
    font-size: 14.200px;
    line-height: 40px;
    color: #999;
}

.task-icons {
    display: flex;
}

.task-icon {
    width: 49px;
    height: 40px;
    position: relative;
    display: flex;
    align-items: center;
    justify-content: center;
}

.task-icon.running::after {
    content: "";
    position: absolute;
    left: 4px;
    right: 5px;
    bottom: 0;
    height: 2px;
    background-color: #a6e8cf;
}

.task-icon.active {
    background-color: #36403b;
    border-bottom: 2px solid #a6e8cf;
}

.tray {
    margin-left: auto;
    height: 40px;
    display: flex;
    align-items: center;
    gap: 9px;
}

.clock {
    width: 64px;
    margin-left: 2px;
    display: flex;
    flex-direction: column;
    align-items: center;
    font-family: 'Roboto', sans-serif;
    font-size: 12px;
    line-height: 18px;
    color: #e6e6e6;
}

.show-desktop {
    width: 1px;
    height: 40px;
    background-color: #333;
    margin-left: -1px;
    margin-right: 4px;
}

/* watermark sits over everything */
.watermark {
    position: absolute;
    left: 1073px;
    top: 650px;
    font-family: 'Open Sans', sans-serif;
    color: rgba(170, 170, 170, 0.6);
    white-space: nowrap;
}

.wm-big {
    font-size: 19px;
    line-height: 25px;
}

.wm-small {
    font-size: 14.500px;
    line-height: 20px;
}
```
